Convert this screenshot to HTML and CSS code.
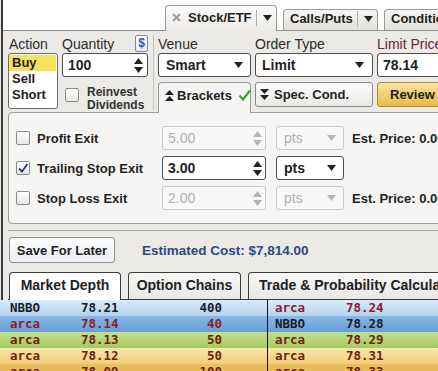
FILE: index.html
```html
<!DOCTYPE html>
<html lang="en">

<head>
    <meta charset="UTF-8">
    <meta name="viewport" content="width=device-width, initial-scale=1.0">
    <title>Order Entry</title>
    <link rel="stylesheet" href="styles.css">
</head>

<body>
    <div class="window">
        <div class="tabstrip">
            <div class="tab active">
                <svg class="close" width="9" height="9" viewBox="0 0 9 9"><path d="M1 1L8 8M8 1L1 8" stroke="#9b9b9b" stroke-width="1.8"/></svg>
                <span class="tab-title">Stock/ETF</span>
                <span class="tab-div"></span>
                <svg class="tri" width="9" height="6" viewBox="0 0 9 6"><polygon points="0,0 9,0 4.5,6" fill="#222"/></svg>
            </div>
            <div class="tab">
                <span class="tab-title">Calls/Puts</span>
                <span class="tab-div"></span>
                <svg class="tri" width="9" height="6" viewBox="0 0 9 6"><polygon points="0,0 9,0 4.5,6" fill="#222"/></svg>
            </div>
            <div class="tab wide">
                <span class="tab-title">Conditions</span>
            </div>
        </div>

        <div class="panel">
            <div class="order">
                <div class="action">
                    <div class="label">Action</div>
                    <div class="listbox">
                        <div class="item selected">Buy</div>
                        <div class="item">Sell</div>
                        <div class="item">Short</div>
                    </div>
                </div>

                <div class="qty">
                    <div class="label qty-label">
                        <span>Quantity</span>
                        <span class="dollar">$</span>
                    </div>
                    <div class="field spin">
                        <span>100</span>
                        <svg width="9" height="15" viewBox="0 0 9 15"><polygon points="0,6 4.5,0 9,6" fill="#222"/><polygon points="0,9 9,9 4.5,15" fill="#222"/></svg>
                    </div>
                    <div class="reinvest">
                        <span class="check"></span>
                        <span class="reinvest-text">Reinvest<br>Dividends</span>
                    </div>
                </div>

                <div class="vsep"></div>

                <div class="fields">
                    <div class="label">Venue</div>
                    <div class="label">Order Type</div>
                    <div class="label maroon">Limit Price</div>

                    <div class="field select venue">
                        <span>Smart</span>
                        <svg width="9" height="6" viewBox="0 0 9 6"><polygon points="0,0 9,0 4.5,6" fill="#222"/></svg>
                    </div>
                    <div class="field select otype">
                        <span>Limit</span>
                        <svg width="9" height="6" viewBox="0 0 9 6"><polygon points="0,0 9,0 4.5,6" fill="#222"/></svg>
                    </div>
                    <div class="field price">
                        <span>78.14</span>
                    </div>

                    <div class="bracket-tab">
                        <svg width="9" height="11" viewBox="0 0 9 11"><polygon points="0,5 4.5,0 9,5" fill="#222"/><polygon points="0,11 4.5,6 9,11" fill="#222"/></svg>
                        <span>Brackets</span>
                        <svg class="ok" width="13" height="12" viewBox="0 0 13 12"><path d="M1.5 6.5L5 10.5L12 1.5" stroke="#3c9a3c" stroke-width="2.2" fill="none"/></svg>
                    </div>
                    <div class="btn spec">
                        <svg width="9" height="11" viewBox="0 0 9 11"><polygon points="0,0 9,0 4.5,5" fill="#222"/><polygon points="0,6 9,6 4.5,11" fill="#222"/></svg>
                        <span>Spec. Cond.</span>
                    </div>
                    <div class="btn review">Review</div>
                </div>
            </div>

            <div class="brackets">
                <div class="exit-row">
                    <span class="check"></span>
                    <span class="exit-name">Profit Exit</span>
                    <div class="field num off">
                        <span>5.00</span>
                        <svg width="9" height="15" viewBox="0 0 9 15"><polygon points="0,6 4.5,0 9,6" fill="#b4b4b4"/><polygon points="0,9 9,9 4.5,15" fill="#b4b4b4"/></svg>
                    </div>
                    <div class="field unit off">
                        <span>pts</span>
                        <svg width="9" height="6" viewBox="0 0 9 6"><polygon points="0,0 9,0 4.5,6" fill="#b4b4b4"/></svg>
                    </div>
                    <span class="est">Est. Price: 0.00</span>
                </div>
                <div class="exit-row">
                    <span class="check on">
                        <svg width="12" height="12" viewBox="0 0 12 12"><path d="M2 6.5L5 9.5L10.5 2" stroke="#2b3f78" stroke-width="1.8" fill="none"/></svg>
                    </span>
                    <span class="exit-name">Trailing Stop Exit</span>
                    <div class="field num">
                        <span>3.00</span>
                        <svg width="9" height="15" viewBox="0 0 9 15"><polygon points="0,6 4.5,0 9,6" fill="#222"/><polygon points="0,9 9,9 4.5,15" fill="#222"/></svg>
                    </div>
                    <div class="field unit">
                        <span>pts</span>
                        <svg width="9" height="6" viewBox="0 0 9 6"><polygon points="0,0 9,0 4.5,6" fill="#222"/></svg>
                    </div>
                </div>
                <div class="exit-row">
                    <span class="check"></span>
                    <span class="exit-name">Stop Loss Exit</span>
                    <div class="field num off">
                        <span>2.00</span>
                        <svg width="9" height="15" viewBox="0 0 9 15"><polygon points="0,6 4.5,0 9,6" fill="#b4b4b4"/><polygon points="0,9 9,9 4.5,15" fill="#b4b4b4"/></svg>
                    </div>
                    <div class="field unit off">
                        <span>pts</span>
                        <svg width="9" height="6" viewBox="0 0 9 6"><polygon points="0,0 9,0 4.5,6" fill="#b4b4b4"/></svg>
                    </div>
                    <span class="est">Est. Price: 0.00</span>
                </div>
            </div>

            <div class="footer">
                <div class="btn save">Save For Later</div>
                <span class="cost">Estimated Cost: $7,814.00</span>
            </div>

            <div class="lower-tabs">
                <div class="ltab active">Market Depth</div>
                <div class="ltab">Option Chains</div>
                <div class="ltab calc">Trade &amp; Probability Calculator</div>
            </div>
        </div>
    </div>

    <div class="depth">
        <div class="side bid">
            <div class="row r1 dark"><span class="ex">NBBO</span><span class="px">78.21</span><span class="sz">400</span></div>
            <div class="row r2 red"><span class="ex">arca</span><span class="px">78.14</span><span class="sz">40</span></div>
            <div class="row r3 brown"><span class="ex">arca</span><span class="px">78.13</span><span class="sz">50</span></div>
            <div class="row r4 brown"><span class="ex">arca</span><span class="px">78.12</span><span class="sz">50</span></div>
            <div class="row r5 brown"><span class="ex">arca</span><span class="px">78.09</span><span class="sz">100</span></div>
        </div>
        <div class="side ask">
            <div class="row r1 red"><span class="ex">arca</span><span class="px">78.24</span></div>
            <div class="row r2 dark"><span class="ex">NBBO</span><span class="px">78.28</span></div>
            <div class="row r3 brown"><span class="ex">arca</span><span class="px">78.29</span></div>
            <div class="row r4 brown"><span class="ex">arca</span><span class="px">78.31</span></div>
            <div class="row r5 brown"><span class="ex">arca</span><span class="px">78.33</span></div>
        </div>
    </div>
</body>

</html>
```

FILE: styles.css
```css
* {
    box-sizing: border-box;
}

body {
    margin: 0;
    width: 438px;
    height: 371px;
    overflow: hidden;
    background-color: #ebeae6;
    font-family: "Liberation Sans", Arial, sans-serif;
    color: #222;
}

svg {
    display: block;
    flex-shrink: 0;
}

.window {
    margin-left: 1px;
    border-left: 2px solid #3a3a3a;
}

/* top tabs */
.tabstrip {
    height: 31px;
    background-color: #fff;
    border-bottom: 1px solid #8e8e8e;
    display: flex;
    align-items: flex-end;
    padding-left: 162px;
}

.tab {
    flex-shrink: 0;
    display: flex;
    align-items: center;
    width: 95px;
    height: 21px;
    margin-left: 6px;
    padding: 0 0 3px 6px;
    border: 1px solid #9a9a9a;
    border-bottom: none;
    border-radius: 4px 4px 0 0;
    background: linear-gradient(#f6f5f2, #e2e0da);
}

.tab.active {
    width: 112px;
    height: 26px;
    margin-left: 0;
    margin-bottom: -1px;
    padding-bottom: 2px;
    background: linear-gradient(#fcfcfc, #ebeae6);
}

.tab.wide {
    width: 90px;
}

.close {
    margin-right: 7px;
}

.tab-title {
    font-size: 13px;
    font-weight: bold;
    white-space: nowrap;
}

.tab-div {
    width: 1px;
    height: 16px;
    margin-left: 4px;
    margin-right: 6px;
    background-color: #b2b2b2;
}

/* order panel */
.panel {
    padding: 4px 0 0 5px;
}

.order {
    display: flex;
}

.label {
    height: 18px;
    line-height: 18px;
    font-size: 14px;
    color: #2c2c2c;
    white-space: nowrap;
}

.maroon {
    color: #6b2340;
}

.action {
    width: 50px;
    flex-shrink: 0;
}

.action .label {
    padding-left: 1px;
}

.listbox {
    height: 56px;
    border: 1px solid #6e6e6e;
    border-radius: 3px;
    background-color: #fff;
    padding-top: 1px;
}

.item {
    height: 16px;
    line-height: 16px;
    padding-left: 3px;
    font-size: 13px;
    font-weight: bold;
}

.item.selected {
    margin-right: 1px;
    background-color: #f7e35a;
}

.qty {
    width: 86px;
    margin-left: 4px;
    flex-shrink: 0;
}

.qty-label {
    display: flex;
    justify-content: space-between;
}

.dollar {
    width: 13px;
    height: 17px;
    line-height: 15px;
    text-align: center;
    font-size: 12px;
    font-weight: bold;
    color: #2a5aa8;
    border: 1px solid #7d8aa6;
    border-radius: 2px;
    background: linear-gradient(#fff, #e2e6ee);
}

.field {
    display: flex;
    align-items: center;
    justify-content: space-between;
    height: 24px;
    border: 1px solid #4e4e4e;
    border-radius: 3px;
    background-color: #fff;
    font-size: 14px;
    font-weight: bold;
    white-space: nowrap;
}

.spin {
    padding: 0 4px 0 5px;
}

.reinvest {
    display: flex;
    align-items: flex-start;
    margin-top: 9px;
    padding-left: 3px;
}

.check {
    width: 14px;
    height: 14px;
    flex-shrink: 0;
    border: 1px solid #8a8a8a;
    border-radius: 2px;
    background: linear-gradient(#fff, #e6e6e6);
}

.check.on svg {
    margin: 0;
}

.reinvest .check {
    margin-top: 2px;
}

.reinvest-text {
    margin-left: 8px;
    font-size: 12px;
    font-weight: bold;
    line-height: 13px;
    color: #333;
}

.vsep {
    width: 1px;
    margin-left: 5px;
    margin-bottom: 3px;
    background-color: #c4c3bf;
    flex-shrink: 0;
}

.fields {
    margin-left: 4px;
    flex-shrink: 0;
    display: grid;
    grid-template-columns: 93px 118px 90px;
    grid-template-rows: 18px 24px 36px;
    column-gap: 4px;
}

.select {
    padding: 0 7px 0 7px;
}

.otype {
    padding: 0 8px 0 6px;
}

.price {
    padding-left: 5px;
}

.bracket-tab {
    position: relative;
    z-index: 1;
    margin-top: 5px;
    height: 31px;
    display: flex;
    align-items: center;
    padding: 0 0 6px 6px;
    border: 1px solid #9a9a9a;
    border-bottom: none;
    border-radius: 4px 4px 0 0;
    background-color: #f5f5f4;
    font-size: 13px;
    font-weight: bold;
}

.bracket-tab span {
    margin-left: 3px;
}

.bracket-tab .ok {
    margin-left: 6px;
}

.btn {
    display: flex;
    align-items: center;
    height: 25px;
    border: 1px solid #8c8c8c;
    border-radius: 3px;
    background: linear-gradient(#fcfcfc, #eae9e6);
    font-size: 13px;
    font-weight: bold;
    white-space: nowrap;
}

.spec {
    margin-top: 5px;
    padding-left: 4px;
}

.spec span {
    margin-left: 5px;
}

.review {
    margin-top: 5px;
    padding-left: 12px;
    border-color: #ad8c36;
    background: linear-gradient(#f8e4a2, #e8bb48);
}

/* brackets box */
.brackets {
    margin-top: -1px;
    margin-right: -12px;
    border: 1px solid #9c9c9c;
    border-radius: 4px;
    background-color: #f5f5f4;
    padding: 13px 0 13px 7px;
    display: flex;
    flex-direction: column;
    gap: 6px;
}

.exit-row {
    display: flex;
    align-items: center;
    height: 24px;
}

.exit-name {
    width: 125px;
    margin-left: 7px;
    font-size: 13px;
    font-weight: bold;
    color: #2a1f22;
    white-space: nowrap;
}

.num {
    width: 104px;
    padding: 0 3px 0 5px;
}

.unit {
    width: 68px;
    margin-left: 10px;
    padding: 0 7px 0 7px;
}

.field.off {
    border-color: #c9c9c9;
    background-color: #f8f8f8;
    color: #b0b0b0;
    font-weight: normal;
}

.est {
    margin-left: 8px;
    font-size: 13px;
    font-weight: bold;
    white-space: nowrap;
}

/* footer */
.footer {
    margin-top: 6px;
    border-top: 1px solid #a9a9a6;
    padding: 6px 0 0 1px;
    display: flex;
    align-items: center;
}

.save {
    width: 106px;
    height: 26px;
    justify-content: center;
    border-color: #8e9196;
    background: linear-gradient(#fdfdfe, #eceef2);
}

.cost {
    margin-left: 27px;
    font-size: 13.5px;
    font-weight: bold;
    color: #2c4b7c;
    white-space: nowrap;
}

.lower-tabs {
    margin-top: 9px;
    height: 28px;
    display: flex;
    align-items: flex-end;
    padding-left: 1px;
    border-bottom: 1px solid #3c3c3c;
}

.ltab {
    flex-shrink: 0;
    width: 113px;
    height: 27px;
    margin-left: 7px;
    line-height: 25px;
    text-align: center;
    border: 1px solid #3c3c3c;
    border-bottom: none;
    border-radius: 4px 4px 0 0;
    background: linear-gradient(#f7f7f6, #e9e8e5);
    font-size: 14px;
    font-weight: bold;
    white-space: nowrap;
    overflow: hidden;
}

.ltab.active {
    width: 112px;
    height: 28px;
    margin-left: 0;
    margin-bottom: -1px;
    background: #fff;
}

.ltab.calc {
    width: 220px;
    padding-left: 10px;
    text-align: left;
}

/* market depth */
.depth {
    display: flex;
}

.side {
    font-family: "DejaVu Sans Mono", monospace;
    font-size: 12.5px;
    font-weight: bold;
}

.bid {
    width: 268px;
    flex-shrink: 0;
    border-right: 1px solid #111;
}

.ask {
    flex: 1;
}

.row {
    display: flex;
    height: 16px;
    line-height: 16px;
    white-space: nowrap;
}

.bid .row {
    padding-left: 10px;
}

.ask .row {
    padding-left: 7px;
}

.ex {
    width: 71px;
}

.px {
    width: 90px;
}

.sz {
    width: 51px;
    text-align: right;
}

.r1 {
    background: linear-gradient(#dcebf8, #b3d2ee);
}

.r2 {
    background: linear-gradient(#8ab8e5, #669dd6);
}

.r3 {
    background: linear-gradient(#c4e08e, #a3ca62);
}

.r4 {
    background: linear-gradient(#fbe6aa, #f2cd78);
}

.r5 {
    background: linear-gradient(#ebc063, #dfac46);
}

.dark {
    color: #1a1b2c;
}

.red {
    color: #8a1c34;
}

.brown {
    color: #6e2412;
}
```
